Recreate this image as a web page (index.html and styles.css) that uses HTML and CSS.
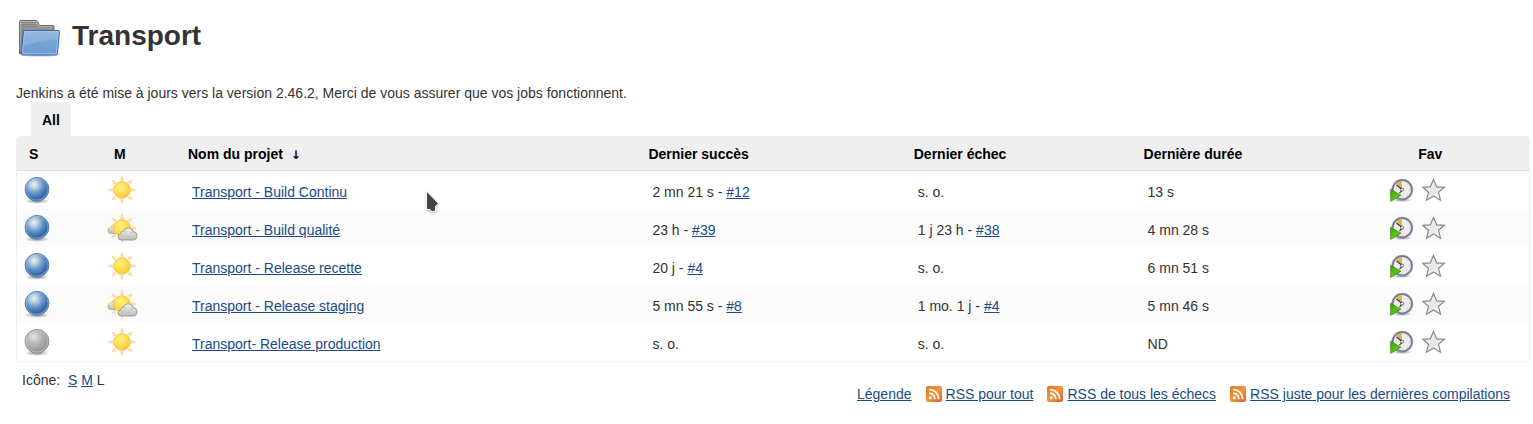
FILE: index.html
```html
<!DOCTYPE html>
<html lang="fr">
<head>
<meta charset="utf-8">
<title>Transport [Jenkins]</title>
<link rel="stylesheet" href="styles.css">
</head>
<body>
<svg class="sprites" aria-hidden="true">
  <defs>
    <radialGradient id="blue-fill" cx=".38" cy=".3" r=".72">
      <stop offset="0" stop-color="#f4f7e4"/><stop offset=".22" stop-color="#b9cfe2"/><stop offset=".55" stop-color="#5f8fc7"/><stop offset=".85" stop-color="#3465a4"/><stop offset="1" stop-color="#5a8ac4"/>
    </radialGradient>
    <radialGradient id="grey-fill" cx=".36" cy=".3" r=".75">
      <stop offset="0" stop-color="#e4e4e4"/><stop offset=".4" stop-color="#b9b9b9"/><stop offset=".85" stop-color="#959595"/><stop offset="1" stop-color="#adadad"/>
    </radialGradient>
    <radialGradient id="shade"><stop offset="0" stop-color="#000" stop-opacity=".45"/><stop offset="1" stop-color="#000" stop-opacity="0"/></radialGradient>
    <radialGradient id="sun-fill" cx=".4" cy=".35" r=".7"><stop offset="0" stop-color="#fff08a"/><stop offset=".5" stop-color="#ffe04f"/><stop offset="1" stop-color="#fcbf3c"/></radialGradient>
    <linearGradient id="cloud-fill" x2="0" y2="1"><stop offset="0" stop-color="#f2f2f0"/><stop offset="1" stop-color="#bcbdb9"/></linearGradient>
    <linearGradient id="back-fill" x2="0" y2="1"><stop offset="0" stop-color="#a3a3a3"/><stop offset="1" stop-color="#666"/></linearGradient>
    <linearGradient id="front-fill" x2="0" y2="1"><stop offset="0" stop-color="#82abd8"/><stop offset="1" stop-color="#6b9bd2"/></linearGradient>
    <linearGradient id="play-fill" x2="1" y2="1"><stop offset="0" stop-color="#3f9a08"/><stop offset=".5" stop-color="#55c41b"/><stop offset="1" stop-color="#4ea014"/></linearGradient>
    <linearGradient id="star-fill" x2="1" y2="1"><stop offset="0" stop-color="#fff"/><stop offset=".5" stop-color="#e6e6e6"/><stop offset="1" stop-color="#fff"/></linearGradient>
    <linearGradient id="rss-fill" x2="1" y2="1"><stop offset="0" stop-color="#e2722d"/><stop offset=".5" stop-color="#f6963c"/><stop offset="1" stop-color="#d96127"/></linearGradient>
  </defs>
  <symbol id="folder" viewBox="0 0 48 48">
    <ellipse cx="24" cy="42" rx="23" ry="3.500" fill="url(#shade)"/>
    <path d="M3.500 41.500V9.500q0-1 1-1h15.500q1 0 1.500 1l2 4h13.500q1 0 1 1v27z" fill="url(#back-fill)" stroke="#686868"/>
    <path d="M5 10.500h15M5 12.500h16M5 14.500h32M5 17h3M5 20h3M5 23h3M5 26h3M5 29h3M5 32h2M5 35h2M5 38h2" stroke="#777" stroke-width=".7"/>
    <path d="M4.500 40V9.500H20l2.500 5H37" fill="none" stroke="#c8c8c8" stroke-width=".6"/>
    <path d="M8.500 18.500h34q1 0 1 1l-2 22q-.2 1.500-1.500 1.500H6q-1 0-.8-1.500l2.300-22q0-1 1-1z" fill="url(#front-fill)" stroke="#3465a4"/>
    <path d="M8.700 19.600h33.600l-.7 7.500C29 28 20 30 7.600 34z" fill="#fff" opacity=".14"/>
    <path d="M8.700 19.600h33.600L40.400 41.800H6.300z" fill="none" stroke="#a9c6e8" stroke-width=".8"/>
  </symbol>
  <symbol id="ball-blue" viewBox="0 0 32 32">
    <ellipse cx="16" cy="27" rx="12.500" ry="3" fill="url(#shade)"/>
    <circle cx="16" cy="15.300" r="11.900" fill="url(#blue-fill)" stroke="#4f79ad" stroke-width=".9"/>
    <circle cx="16" cy="15.300" r="10.900" fill="none" stroke="#b4cce6" stroke-opacity=".5" stroke-width=".8"/>
  </symbol>
  <symbol id="ball-grey" viewBox="0 0 32 32">
    <ellipse cx="16" cy="27" rx="12.500" ry="3" fill="url(#shade)"/>
    <circle cx="16" cy="15.300" r="11.900" fill="url(#grey-fill)" stroke="#858585" stroke-width=".9"/>
    <circle cx="16" cy="15.300" r="10.900" fill="none" stroke="#ddd" stroke-opacity=".6" stroke-width=".8"/>
  </symbol>
  <symbol id="sun" viewBox="0 0 32 32">
    <g fill="#fde3a8" stroke="#f6cf86" stroke-width=".6">
      <path id="ray" d="M15 1.700l1.500 4.600h-3z"/>
      <use href="#ray" transform="rotate(45 15 16)"/><use href="#ray" transform="rotate(90 15 16)"/><use href="#ray" transform="rotate(135 15 16)"/><use href="#ray" transform="rotate(180 15 16)"/><use href="#ray" transform="rotate(225 15 16)"/><use href="#ray" transform="rotate(270 15 16)"/><use href="#ray" transform="rotate(315 15 16)"/>
    </g>
    <circle cx="15" cy="16" r="8.300" fill="url(#sun-fill)" stroke="#f7c253"/>
  </symbol>
  <symbol id="cloudy" viewBox="0 0 32 32">
    <path d="M4.500 21.500q-3.500 0-3.500-2.700 0-2.600 2.600-2.800-.2-2.300 2.200-2.300.6-1.700 2.600-1.700 2.600 0 3.600 2v7.500z" fill="url(#cloud-fill)" stroke="#a2a39e" stroke-width=".9"/>
    <use href="#sun" width="32" height="32"/>
    <path d="M14.500 28q-3.300 0-3.300-3.200 0-2.700 2.700-3-.2-2.800 2.900-3 1-3 4.500-3 3.900 0 4.800 3.700 3.900.3 3.900 4 0 4.500-3.800 4.500z" fill="url(#cloud-fill)" stroke="#92938f" stroke-width=".9"/>
    <path d="M17 19.500q2 .3 2.300 2M23.500 20.500q1.500-.9 3 .1M14.500 23.500q1.300-.8 2.500.2M20 25q1.300-1.200 3 0" fill="none" stroke="#b8b8b4" stroke-width=".7"/>
  </symbol>
  <symbol id="clock" viewBox="0 0 24 24">
    <ellipse cx="12" cy="22" rx="10" ry="2" fill="url(#shade)"/>
    <circle cx="12.300" cy="11.700" r="9.700" fill="#ededeb" stroke="#797a94" stroke-width="2"/>
    <circle cx="12.300" cy="11.700" r="10.700" fill="none" stroke="#a6a7ba" stroke-width=".5"/>
    <path d="M12 10.500L6 5.500Q8.500 3.500 12 3.300z" fill="#dcb949"/>
    <path d="M6.500 7l6 4.700-3 3.500" fill="none" stroke="#333" stroke-width="1.100"/>
    <circle cx="12.100" cy="11.600" r="1.500" fill="#fff" stroke="#333" stroke-width=".7"/>
    <path d="M19 11.700h1M12.300 18.500v1M17.200 6.500l.5-.5M17 16.500l.5.500" stroke="#bbb"/>
    <path d="M.6 11.300V23.400L11 17.200z" fill="url(#play-fill)" stroke="#3b8d0d" stroke-width=".7"/>
  </symbol>
  <symbol id="star" viewBox="0 0 24 24">
    <path d="M11.500 1.500l3.200 7.300 7.700.5-5.900 5 2 7.900-7-4.200-7 4.200 2-7.900-5.900-5 7.700-.5z" fill="url(#star-fill)" stroke="#888a85" stroke-width="1.200"/>
  </symbol>
  <symbol id="rss" viewBox="0 0 16 16">
    <rect width="16" height="16" rx="2" fill="url(#rss-fill)"/>
    <circle cx="4.300" cy="11.800" r="1.500" fill="#fff"/>
    <path d="M3 7.200a6 6 0 0 1 6 6M3 3.500a9.700 9.700 0 0 1 9.700 9.700" fill="none" stroke="#fff" stroke-width="1.700"/>
  </symbol>
</svg>

<main class="page">
  <h1 class="title"><svg class="title-icon" aria-hidden="true"><use href="#folder"/></svg>Transport</h1>
  <p class="message">Jenkins a été mise à jours vers la version 2.46.2, Merci de vous assurer que vos jobs fonctionnent.</p>
  <nav class="tabs"><a class="tab" href="#all">All</a></nav>

  <table class="projects">
    <colgroup><col class="col-status"><col class="col-weather"><col class="col-name"><col class="col-success"><col class="col-failure"><col class="col-duration"><col></colgroup>
    <thead>
      <tr>
        <th class="status"><a href="#s">S</a></th>
        <th class="weather"><a href="#m">M</a></th>
        <th><a href="#nom">Nom du projet&nbsp; <span class="arrow">↓</span></a></th>
        <th><a href="#succes">Dernier succès</a></th>
        <th><a href="#echec">Dernier échec</a></th>
        <th><a href="#duree">Dernière durée</a></th>
        <th class="fav"><a href="#fav">Fav</a></th>
      </tr>
    </thead>
    <tbody>
      <tr>
        <td class="status"><svg class="icon" role="img" aria-label="Succès"><use href="#ball-blue"/></svg></td>
        <td class="weather"><svg class="icon" role="img" aria-label="Stable"><use href="#sun"/></svg></td>
        <td><a href="#p1">Transport - Build Continu</a></td>
        <td>2 mn 21 s - <a href="#12">#12</a></td><td>s. o.</td><td>13 s</td>
        <td class="actions"><div class="action-list"><button aria-label="Lancer un build"><svg><use href="#clock"/></svg></button><button aria-label="Favori"><svg><use href="#star"/></svg></button></div></td>
      </tr>
      <tr>
        <td class="status"><svg class="icon" role="img" aria-label="Succès"><use href="#ball-blue"/></svg></td>
        <td class="weather"><svg class="icon" role="img" aria-label="Nuageux"><use href="#cloudy"/></svg></td>
        <td><a href="#p2">Transport - Build qualité</a></td>
        <td>23 h - <a href="#39">#39</a></td><td>1 j 23 h - <a href="#38">#38</a></td><td>4 mn 28 s</td>
        <td class="actions"><div class="action-list"><button aria-label="Lancer un build"><svg><use href="#clock"/></svg></button><button aria-label="Favori"><svg><use href="#star"/></svg></button></div></td>
      </tr>
      <tr>
        <td class="status"><svg class="icon" role="img" aria-label="Succès"><use href="#ball-blue"/></svg></td>
        <td class="weather"><svg class="icon" role="img" aria-label="Stable"><use href="#sun"/></svg></td>
        <td><a href="#p3">Transport - Release recette</a></td>
        <td>20 j - <a href="#r4">#4</a></td><td>s. o.</td><td>6 mn 51 s</td>
        <td class="actions"><div class="action-list"><button aria-label="Lancer un build"><svg><use href="#clock"/></svg></button><button aria-label="Favori"><svg><use href="#star"/></svg></button></div></td>
      </tr>
      <tr>
        <td class="status"><svg class="icon" role="img" aria-label="Succès"><use href="#ball-blue"/></svg></td>
        <td class="weather"><svg class="icon" role="img" aria-label="Nuageux"><use href="#cloudy"/></svg></td>
        <td><a href="#p4">Transport - Release staging</a></td>
        <td>5 mn 55 s - <a href="#s8">#8</a></td><td>1 mo. 1 j - <a href="#s4">#4</a></td><td>5 mn 46 s</td>
        <td class="actions"><div class="action-list"><button aria-label="Lancer un build"><svg><use href="#clock"/></svg></button><button aria-label="Favori"><svg><use href="#star"/></svg></button></div></td>
      </tr>
      <tr>
        <td class="status"><svg class="icon" role="img" aria-label="Non construit"><use href="#ball-grey"/></svg></td>
        <td class="weather"><svg class="icon" role="img" aria-label="Stable"><use href="#sun"/></svg></td>
        <td><a href="#p5">Transport- Release production</a></td>
        <td>s. o.</td><td>s. o.</td><td>ND</td>
        <td class="actions"><div class="action-list"><button aria-label="Lancer un build"><svg><use href="#clock"/></svg></button><button aria-label="Favori"><svg><use href="#star"/></svg></button></div></td>
      </tr>
    </tbody>
  </table>

  <footer class="footer">
    <div class="sizes">Icône:&nbsp; <a href="#size-s">S</a> <a href="#size-m">M</a> L</div>
    <div class="feeds">
      <a href="#legende">Légende</a>
      <span class="feed"><svg class="rss" aria-hidden="true"><use href="#rss"/></svg><a href="#rss-all">RSS pour tout</a></span>
      <span class="feed"><svg class="rss" aria-hidden="true"><use href="#rss"/></svg><a href="#rss-failed">RSS de tous les échecs</a></span>
      <span class="feed"><svg class="rss" aria-hidden="true"><use href="#rss"/></svg><a href="#rss-latest">RSS juste pour les dernières compilations</a></span>
    </div>
  </footer>
</main>
<svg class="cursor" viewBox="0 0 16 24" aria-hidden="true"><path d="M1.500 0v18.500h3.500l2 2.500 3.500-1.200.2-4.800 2.800-2.500z" fill="#444" stroke="#fff" stroke-width="1"/></svg>
</body>
</html>
```

FILE: styles.css
```css
body {
  margin: 0;
  background: #fff;
  color: #333;
  font: 14px/20px "Liberation Sans", Arial, sans-serif;
}

a { color: #204a87; }

.sprites { position: absolute; width: 0; height: 0; }

.page { padding: 12px 3px 0 16px; }

.title {
  display: flex;
  align-items: center;
  gap: 8px;
  height: 48px;
  margin: 0 0 23px;
  font-size: 28px;
  line-height: 32px;
}

.title-icon { width: 48px; height: 48px; }

.message { margin: 0; }

.tabs { display: flex; padding-left: 15px; }

.tab {
  padding: 8px 11px 6px;
  border-radius: 4px 4px 0 0;
  background: #efefef;
  color: #000;
  font-weight: bold;
  text-decoration: none;
  margin-top: -1px;
}

.projects {
  width: 100%;
  table-layout: fixed;
  border: 1px solid #efefef;
  border-top: 0;
  border-radius: 4px;
  border-collapse: separate;
  border-spacing: 0;
}

.col-status { width: 86px; }
.col-weather { width: 81px; }
.col-name { width: 30.45%; }
.col-success { width: 17.55%; }
.col-failure { width: 15.2%; }
.col-duration { width: 16.05%; }

th {
  padding: 8px 4px 6px;
  border-bottom: 1px solid #ddd;
  background: #efefef;
  text-align: left;
}

th:first-child { border-top-left-radius: 4px; }
th:last-child { border-top-right-radius: 4px; }
th.status { padding-left: 12px; }
th.weather { padding-left: 11px; }
th.fav { padding-left: 36px; }
th a { color: #000; text-decoration: none; }

.arrow { font-family: "DejaVu Sans", sans-serif; font-size: 12px; line-height: 12px; }

td {
  height: 38px;
  box-sizing: border-box;
  padding: 4px 8px 0;
}

td.status, td.weather, td.actions { padding: 0 4px; }

tbody tr:nth-child(even) { background: #fbfbfb; }

.icon { display: block; width: 32px; height: 32px; }

.action-list { display: flex; gap: 8px; padding-left: 4px; }

button { display: block; padding: 0; border: 0; background: none; }

button svg { display: block; width: 24px; height: 24px; }

.footer {
  display: flex;
  justify-content: space-between;
  padding: 8px 20px 0 6px;
}

.feeds { display: flex; gap: 14px; padding-top: 14px; }

.feed { display: flex; align-items: center; gap: 4px; }

.rss { width: 16px; height: 16px; }

.cursor {
  position: absolute;
  top: 191px;
  left: 425px;
  width: 16px;
  height: 24px;
  filter: drop-shadow(0 1px 1px rgba(0, 0, 0, .3));
}
```
